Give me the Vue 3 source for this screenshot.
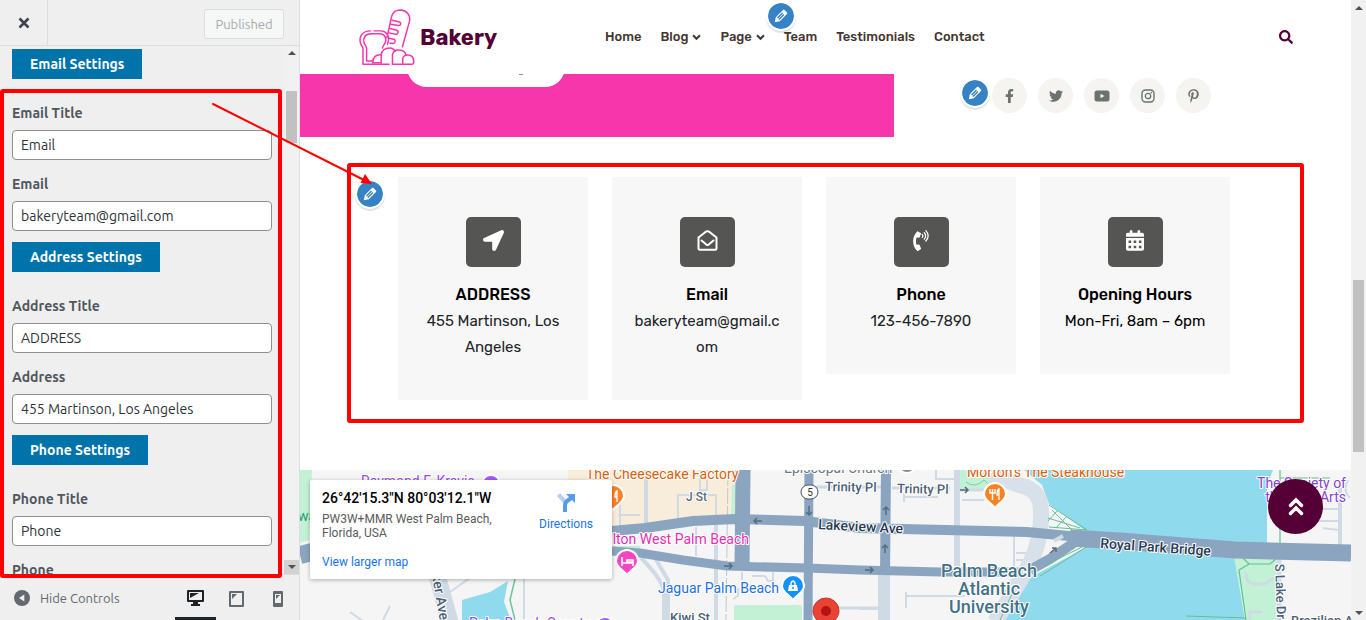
<script setup>
import { ref } from 'vue'

const groups = ref([
  { heading: 'Email Settings', fields: [
    { id: 'email-title', label: 'Email Title', value: 'Email' },
    { id: 'email', label: 'Email', value: 'bakeryteam@gmail.com' }
  ] },
  { heading: 'Address Settings', fields: [
    { id: 'address-title', label: 'Address Title', value: 'ADDRESS' },
    { id: 'address', label: 'Address', value: '455 Martinson, Los Angeles' }
  ] },
  { heading: 'Phone Settings', fields: [
    { id: 'phone-title', label: 'Phone Title', value: 'Phone' },
    { id: 'phone', label: 'Phone', value: '123-456-7890' }
  ] }
])

const nav = [
  { label: 'Home' },
  { label: 'Blog', menu: true },
  { label: 'Page', menu: true },
  { label: 'Team' },
  { label: 'Testimonials' },
  { label: 'Contact' }
]

const cards = [
  { icon: 'arrow', title: 'ADDRESS', text: '455 Martinson, Los Angeles' },
  { icon: 'mail', title: 'Email', text: 'bakeryteam@gmail.com' },
  { icon: 'phone', title: 'Phone', text: '123-456-7890' },
  { icon: 'calendar', title: 'Opening Hours', text: 'Mon-Fri, 8am – 6pm', dark: true }
]

const socials = ['Facebook', 'Twitter', 'YouTube', 'Instagram', 'Pinterest']

const pencil = 'M13.89 3.39l2.71 2.72c.46.46.42 1.24.03 1.64l-8.01 8.02-5.56 1.16 1.16-5.58s7.6-7.63 7.99-8.03c.39-.39 1.22-.39 1.68.07zm-2.73 2.79l-5.59 5.61 1.11 1.11 5.54-5.65zm-2.97 8.23l5.58-5.6-1.07-1.08-5.59 5.6z'
</script>

<template>
  <div class="app">
    <aside class="sidebar">
      <header class="side-head">
        <button class="close" type="button" aria-label="Close">
          <svg width="12" height="12" viewBox="0 0 12 12"><path d="M1.5 1.5L10.5 10.5M10.5 1.5L1.5 10.5" stroke="#3c434a" stroke-width="2.6" /></svg>
        </button>
        <button class="published" type="button" disabled>Published</button>
      </header>

      <div class="side-body">
        <form class="fields" @submit.prevent>
          <section v-for="g in groups" :key="g.heading" class="group">
            <button class="group-btn" type="button">{{ g.heading }}</button>
            <div v-for="f in g.fields" :key="f.id" class="field">
              <label :for="f.id">{{ f.label }}</label>
              <input :id="f.id" v-model="f.value" type="text" />
            </div>
          </section>
        </form>
        <div class="side-scroll">
          <i class="tri up"></i>
          <i class="side-thumb"></i>
          <span class="down-box"><i class="tri down"></i></span>
        </div>
      </div>

      <footer class="side-foot">
        <button class="hide" type="button">
          <svg width="16" height="16" viewBox="0 0 16 16"><circle cx="8" cy="8" r="8" fill="#646970" /><path d="M10.3 4.4V11.6L5 8Z" fill="#efefef" /></svg>
          Hide Controls
        </button>
        <button class="device active" type="button" aria-label="Desktop">
          <svg width="17" height="17" viewBox="0 0 17 17"><path fill-rule="evenodd" d="M1 0H16Q17 0 17 1V11Q17 12 16 12H11V14H13V16H4V14H6V12H1Q0 12 0 11V1Q0 0 1 0ZM2 2V10H15V2Z" fill="#1d2327" /><path d="M3 3H12L3 8Z" fill="#1d2327" /></svg>
        </button>
        <button class="device" type="button" aria-label="Tablet">
          <svg width="15" height="16" viewBox="0 0 15 16"><path fill-rule="evenodd" d="M1 0H14Q15 0 15 1V15Q15 16 14 16H1Q0 16 0 15V1Q0 0 1 0ZM2 2V14H13V2Z" fill="#646970" /><path d="M3 3H8L3 8Z" fill="#646970" /></svg>
        </button>
        <button class="device" type="button" aria-label="Mobile">
          <svg width="10" height="16" viewBox="0 0 10 16"><path fill-rule="evenodd" d="M1 0H9Q10 0 10 1V15Q10 16 9 16H1Q0 16 0 15V1Q0 0 1 0ZM2 3V12H8V3Z" fill="#646970" /><path d="M3 4H7L3 8Z" fill="#646970" /></svg>
        </button>
      </footer>
      <i class="mark"></i>
    </aside>

    <div class="preview">
      <main class="site">
        <header class="site-head">
          <a class="brand" href="#">
            <svg class="logo" viewBox="52 25 170 172" fill="none" stroke="#f736ab" stroke-width="4.5" stroke-linecap="round" stroke-linejoin="round">
              <path d="M89 91C64 91 54 108 58 126C60 136 66 138 66 145V192H145" />
              <path d="M99 91H120C136 91 145 106 143 118L140 132" />
              <path d="M90 100C72 100 65 114 69 127C71 134 77 136 77 144V182H94" />
              <path d="M90 100H119C134 102 138 116 133 127C131 133 125 136 125 143" />
              <path d="M138 112L153 46C157 33 169 28 180 28C197 29 209 43 207 60L185 139" />
              <path d="M154 59L176 64C182 66 181 75 174 75L149 71" />
              <path d="M147 84L168 89C175 92 172 102 165 101L144 97" />
              <path d="M144 113L159 116C166 118 164 128 157 129L147 128" />
              <path d="M121 163C106 161 96 170 95 187H119" />
              <path d="M121 189V164C123 150 134 143 147 143C154 143 160 147 163 153" />
              <path d="M155 192V163C158 151 168 148 176 149C187 150 194 156 196 164" />
              <path d="M186 191V174C189 165 196 163 203 164C214 165 219 173 219 184C220 190 217 192 213 192H155" />
            </svg>
            <strong>Bakery</strong>
          </a>
          <nav class="nav">
            <a v-for="n in nav" :key="n.label" href="#">{{ n.label }}<svg v-if="n.menu" width="9" height="7" viewBox="0 0 9 7"><path d="M1 1.3L4.500 4.800L8 1.300" fill="none" stroke="#44362f" stroke-width="2" /></svg></a>
          </nav>
          <button class="search" type="button" aria-label="Search">
            <svg width="14" height="14" viewBox="0 0 512 512"><path fill="#540037" d="M505 442.700L405.300 343c-4.500-4.500-10.600-7-17-7H372c27.600-35.300 44-79.700 44-128C416 93.100 322.900 0 208 0S0 93.100 0 208s93.100 208 208 208c48.300 0 92.700-16.400 128-44v16.300c0 6.400 2.500 12.500 7 17l99.700 99.700c9.400 9.400 24.600 9.400 33.900 0l28.300-28.300c9.400-9.400 9.400-24.600.1-34zM208 336c-70.700 0-128-57.200-128-128 0-70.700 57.200-128 128-128 70.700 0 128 57.200 128 128 0 70.700-57.200 128-128 128z" /></svg>
          </button>
          <button class="edit edit-nav" type="button" aria-label="Edit menu"><svg viewBox="0 0 20 20"><path :d="pencil" /></svg></button>
        </header>

        <section class="hero">
          <div class="hero-pink"><div class="pill"></div></div>
          <div class="socials">
            <button class="edit" type="button" aria-label="Edit social links"><svg viewBox="0 0 20 20"><path :d="pencil" /></svg></button>
            <a v-for="s in socials" :key="s" class="social" href="#" :aria-label="s">
              <svg v-if="s === 'Facebook'" width="9" height="14" viewBox="0 0 320 512"><path d="M279.140 288l14.220-92.660h-88.910v-60.130c0-25.350 12.420-50.060 52.240-50.060h40.420V6.260S260.430 0 225.360 0c-73.220 0-121.080 44.380-121.080 124.720v70.620H22.890V288h81.390v224h100.170V288z" /></svg>
              <svg v-else-if="s === 'Twitter'" width="14" height="14" viewBox="0 0 512 512"><path d="M459.370 151.716c.325 4.548.325 9.097.325 13.645 0 138.720-105.583 298.558-298.558 298.558-59.452 0-114.680-17.219-161.137-47.106 8.447.974 16.568 1.299 25.340 1.299 49.055 0 94.213-16.568 130.274-44.832-46.132-.975-84.792-31.188-98.112-72.772 6.498.974 12.995 1.624 19.818 1.624 9.421 0 18.843-1.300 27.614-3.573-48.081-9.747-84.143-51.980-84.143-102.985v-1.299c13.969 7.797 30.214 12.670 47.431 13.319-28.264-18.843-46.781-51.005-46.781-87.391 0-19.492 5.197-37.360 14.294-52.954 51.655 63.675 129.300 105.258 216.365 109.807-1.624-7.797-2.599-15.918-2.599-24.040 0-57.828 46.782-104.934 104.934-104.934 30.213 0 57.502 12.670 76.670 33.137 23.715-4.548 46.456-13.320 66.599-25.340-7.798 24.366-24.366 44.833-46.132 57.827 21.117-2.273 41.584-8.122 60.426-16.243-14.292 20.791-32.161 39.308-52.628 54.253z" /></svg>
              <svg v-else-if="s === 'YouTube'" width="16" height="14" viewBox="0 0 16 14"><path fill-rule="evenodd" d="M3 1.500H13Q15.500 1.500 15.500 4V10Q15.500 12.500 13 12.500H3Q.5 12.500 .5 10V4Q.5 1.500 3 1.500ZM6.500 4.700V9.300L10.500 7Z" /></svg>
              <svg v-else-if="s === 'Instagram'" width="14" height="14" viewBox="0 0 14 14"><g fill="none" stroke="#6b7270"><rect x="1" y="1" width="12" height="12" rx="3.500" stroke-width="1.400" /><circle cx="7" cy="7" r="2.700" stroke-width="1.300" /></g><circle cx="10.400" cy="3.600" r=".8" /></svg>
              <svg v-else width="11" height="14" viewBox="0 0 384 512"><path d="M204 6.500C101.400 6.500 0 74.900 0 185.600 0 256 39.600 296 63.600 296c9.900 0 15.600-27.600 15.600-35.400 0-9.300-23.700-29.100-23.700-67.800 0-80.400 61.200-137.400 140.400-137.400 68.100 0 118.500 38.700 118.500 109.800 0 53.100-21.300 152.700-90.300 152.700-24.900 0-46.200-18-46.200-43.800 0-37.800 26.400-74.400 26.400-113.400 0-66.200-93.900-54.200-93.900 25.800 0 16.800 2.100 35.400 9.600 50.700-13.800 59.400-42 147.900-42 209.100 0 18.900 2.700 37.500 4.500 56.400 3.400 3.800 1.700 3.400 6.900 1.500 50.400-69 48.600-82.500 71.400-172.800 12.300 23.400 44.100 36 69.300 36 106.200 0 153.900-103.500 153.900-196.800C384 71.300 298.200 6.500 204 6.500z" /></svg>
            </a>
          </div>
        </section>

        <section class="contact">
          <button class="edit edit-contact" type="button" aria-label="Edit contact details"><svg viewBox="0 0 20 20"><path :d="pencil" /></svg></button>
          <article v-for="c in cards" :key="c.title" class="card">
            <div class="card-icon">
              <svg v-if="c.icon === 'arrow'" width="21" height="21" viewBox="0 0 512 512"><path d="M444.520 3.520L28.740 195.420c-47.970 22.390-31.980 92.750 19.190 92.750h175.910v175.910c0 51.170 70.360 67.170 92.750 19.190l191.900-415.780c15.990-38.390-25.590-79.970-63.970-63.970z" /></svg>
              <svg v-else-if="c.icon === 'mail'" width="21" height="21" viewBox="0 0 21 21"><g fill="none" stroke="#fff" stroke-width="2" stroke-linejoin="round"><path d="M1.500 7.500L8.800 1.700Q10.500 .6 12.200 1.700L19.500 7.500V18.500Q19.500 19.700 18.300 19.700H2.700Q1.500 19.700 1.500 18.500Z" /><path d="M4.500 10.500L9.300 14.600Q10.500 15.500 11.700 14.600L16.500 10.500" stroke-linecap="round" /></g></svg>
              <svg v-else-if="c.icon === 'phone'" width="16" height="21" viewBox="0 0 384 512"><path d="M97.333 506.966c-129.874-129.874-129.681-340.252 0-469.933 5.698-5.698 14.527-6.632 21.263-2.422l64.817 40.513a17.187 17.187 0 0 1 6.849 20.958l-32.408 81.021a17.188 17.188 0 0 1-17.669 10.719l-55.810-5.580c-21.051 58.261-20.612 122.471 0 179.515l55.811-5.581a17.188 17.188 0 0 1 17.669 10.719l32.408 81.022a17.188 17.188 0 0 1-6.849 20.958l-64.817 40.513a17.190 17.190 0 0 1-21.264-2.422z" /><path d="M222 105Q256 140 222 178M272 62Q340 140 272 222M310 16Q424 140 310 268" fill="none" stroke="#fff" stroke-width="30" stroke-linecap="round" /></svg>
              <svg v-else width="18" height="21" viewBox="0 0 448 512"><path fill-rule="evenodd" d="M0 192H448V464Q448 512 400 512H48Q0 512 0 464ZM64 256V320H128V256ZM192 256V320H256V256ZM320 256V320H384V256ZM64 384V448H128V384ZM192 384V448H256V384ZM320 384V448H384V384ZM400 64h-48V16c0-8.800-7.200-16-16-16h-32c-8.800 0-16 7.200-16 16v48H160V16c0-8.800-7.200-16-16-16h-32c-8.800 0-16 7.200-16 16v48H48C21.500 64 0 85.500 0 112v48h448v-48c0-26.500-21.500-48-48-48z" /></svg>
            </div>
            <h3>{{ c.title }}</h3>
            <p :class="{ dark: c.dark }">{{ c.text }}</p>
          </article>
        </section>

        <section class="map">
          <svg class="map-art" viewBox="300 470 1051 150" preserveAspectRatio="xMinYMin slice">
            <rect x="300" y="470" width="1051" height="150" fill="#f5f5f5" />
            <path d="M300 470H312L309 540L300 543Z" fill="#c3f1d5" />
            <path d="M300 555L312 552" stroke="#8ba5c1" stroke-width="18" />
            <path d="M568 470H735V516L612 529H568Z" fill="#f8eddb" />
            <path d="M732 485H737V515H731Z M612 546H640V552H612Z" fill="#c3f1d5" />
            <path d="M735 605H800Q802 605 802 607V620H734V607Z" fill="#c3f1d5" />
            <path d="M960 470H990V489H960Z" fill="#c3f1d5" />
            <path d="M966 482Q975 489 984 480L990 486" fill="none" stroke="#7cc9a8" />
            <path d="M462 600L490 592L508 581L504 602L511 620H462Z" fill="#90daee" />
            <path d="M515 579L510 600L515 620" fill="none" stroke="#6cc59b" stroke-width="1.500" />
            <path d="M1024 470H1273L1267 485V552L1087 532L1049 504L1042 485Z" fill="#90daee" />
            <path d="M1000 620L1022 582L1090 545L1234 555L1245 620Z" fill="#90daee" />
            <path d="M1234 557H1276V620H1246Z" fill="#c3f1d5" />

            <g fill="none" stroke="#d0dae4">
              <path d="M437 575L450 622" stroke-width="17" />
              <path d="M450 592L474 575M350 612L370 626M382 622L390 606M524 579V620M605 470V530" stroke-width="2" />
              <path d="M646 470V526" stroke-width="4" />
              <path d="M678 520V495H716V520M700 470V490H707V470M696 527V556M618 515H640M620 500V528" stroke-width="2" />
              <path d="M716 525V620" stroke-width="4" />
              <path d="M641 558Q660 577 664 590V620M654 556L668 580V620" stroke-width="4" />
              <path d="M742 572V580M752 576H765L768 581H773V572M738 588V596L733 599" stroke-width="2" />
              <path d="M813 487H884M830 608H878" stroke-width="3" />
              <path d="M884 575V622" stroke-width="12" />
              <path d="M957 470V568" stroke-width="6" />
              <path d="M892 488H950M960 490H1000V496" stroke-width="3" />
              <path d="M904 494V502M904 497H938M936 470V479H958M962 500H984" stroke-width="2" />
              <path d="M1014 536V575M1016 553H1028M1016 560H1026M860 609H877M906 592V608M906 596H965" stroke-width="2" />
              <path d="M991 475L1022 486Q1041 490 1041 512Q1042 545 1024 574L995 622" stroke-width="16" stroke="#d8e0e9" />
              <path d="M1340 488V545" stroke-width="4" />
              <path d="M1318 509H1340M1318 521H1338M1323 528L1338 530M1348 480Q1342 490 1350 498" stroke-width="2" />
              <path d="M1246 573Q1246 584 1255 584H1265L1274 578M1250 620V612H1262" stroke-width="3" />
              <path d="M1279 558V620" stroke-width="5" />
            </g>
            <path d="M728 470L726 620" stroke="#c3c7cb" stroke-width="1" stroke-dasharray="16 2" />
            <g fill="none" stroke="#8ba5c1">
              <path d="M612 531L645 528L693 521L735 519L805 521L860 528L1027 532L1090 538L1120 541L1235 550L1351 553" stroke-width="10" />
              <path d="M1070 538L1120 541L1235 550L1351 553" stroke-width="17" />
              <path d="M612 551L640 553L683 560L727 566L807 568L860 570L940 572H1020" stroke-width="9" />
              <path d="M1030 570L1050 559L1078 540" stroke-width="10" />
              <path d="M743 470L742 568" stroke-width="15" />
              <path d="M809 470L808 620" stroke-width="9" />
              <path d="M886 470L885 575" stroke-width="10" />
            </g>
            <path d="M1054 541L1063 536" stroke="#d0dae4" stroke-width="4" />
            <path d="M1049 505L1087 530L1049 527M1052 510L1072 530M1056 528L1067 516M1048 518L1080 528M1048 521L1058 510M1088 546L1040 576M1082 547L1046 565M1012 594L1000 620" fill="none" stroke="#63c093" />
            <path d="M1280 470V545M1280 478H1330M1243 558L1249 564H1270L1276 559M1249 564L1239 570L1246 620M1186 616L1246 618" fill="none" stroke="#63c093" stroke-width="1.200" />
            <g fill="none" stroke="#536f7b" stroke-width="1.500">
              <path d="M762 521H754M757 518L754 521L757 524M724 566H732M729 563L732 566L729 569M809 506V515M806 512L809 515L812 512M886 515V507M883 510L886 507L889 510M885 553V545M882 548L885 545L888 548M1050 553L1056 548M1052 548H1056V552M960 490H968M965 487L968 490L965 493M865 570H873M870 567L873 570L870 573" />
            </g>
            <g class="txt">
              <text x="361" y="486" fill="#9a4be8" font-size="14">Raymond F. Kravis</text>
              <text x="469" y="628" fill="#9a4be8" font-size="14">Palm Beach County</text>
              <text x="586" y="479" fill="#d8610b" font-size="14">The Cheesecake Factory</text>
              <text x="967" y="477" fill="#d8610b" font-size="14">Morton's The Steakhouse</text>
              <text x="784" y="473" fill="#6a7886" font-size="14">Episcopal Church</text>
              <text x="749" y="544" fill="#e62fb0" font-size="14" text-anchor="end">Hilton West Palm Beach</text>
              <text x="658" y="593" fill="#1f6fe5" font-size="14">Jaguar Palm Beach</text>
              <g fill="#8442d6" font-size="14" text-anchor="end">
                <text x="1346" y="488">The Society of</text>
                <text x="1346" y="502">the Four Arts</text>
              </g>
            </g>
            <g class="txt road">
              <text x="686" y="501" fill="#5c6b7a" font-size="12">J St</text>
              <text x="825" y="491" font-size="13" transform="rotate(1 825 491)">Trinity Pl</text>
              <text x="897" y="493" font-size="13" transform="rotate(1 897 493)">Trinity Pl</text>
              <text x="818" y="529" fill="#283b52" font-size="14" transform="rotate(3 818 529)">Lakeview Ave</text>
              <text x="1100" y="548" fill="#283b52" font-size="14" transform="rotate(4 1100 548)">Royal Park Bridge</text>
              <text x="670" y="622" font-size="13">Kiwi St</text>
              <text x="431" y="570" font-size="14" transform="rotate(80 431 570)">rker Ave</text>
              <text x="1275" y="564" font-size="13" transform="rotate(88 1275 564)">S Lake Dr</text>
              <text x="1291" y="625" font-size="13">Brazilian Ave</text>
              <g fill="#437285" font-size="18" text-anchor="middle">
                <text x="989" y="577">Palm Beach</text>
                <text x="989" y="595">Atlantic</text>
                <text x="989" y="613">University</text>
              </g>
            </g>
            <text x="298" y="521" fill="#1f9b75" font-size="14">wa</text>
            <rect x="801" y="485" width="17" height="14" rx="7" fill="#fff" stroke="#49525c" />
            <text x="810" y="496" font-size="10" text-anchor="middle" fill="#333">5</text>
            <g stroke="#fff" stroke-width="2">
              <circle cx="491" cy="484" r="9" fill="#a259ff" />
              <circle cx="605" cy="626" r="9" fill="#a259ff" />
              <circle cx="907" cy="464" r="9" fill="#7b8d99" />
              <path d="M602 496a11 11 0 1 1 22 0c0 6-6 8-11 14c-5-6-11-8-11-14Z" fill="#ff8126" />
              <path d="M984 494a11 11 0 1 1 22 0c0 6-6 8-11 14c-5-6-11-8-11-14Z" fill="#ff8126" />
              <path d="M616 561a11 11 0 1 1 22 0c0 6-6 8-11 14c-5-6-11-8-11-14Z" fill="#f846c2" />
              <path d="M782 586a11 11 0 1 1 22 0c0 6-6 8-11 14c-5-6-11-8-11-14Z" fill="#1193fb" />
            </g>
            <g fill="none" stroke="#fff" stroke-width="1.400">
              <path d="M990 489V493H995V489M992.500 489V500M999 500V489Q997 490 997 495H999M617 502V491Q615 492 615 497H617" />
              <path d="M622 557V566M622 563H633V566M633 562V560H627V562Z" stroke-width="1.600" />
              <path d="M791 585V583Q793 579 795 583V585" />
            </g>
            <path d="M789 585H797L798 591H788Z" fill="#fff" />
            <circle cx="793" cy="588" r="1" fill="#1193fb" />
            <path d="M813 611a13 13 0 1 1 26 0c0 7-7 11-13 22c-6-11-13-15-13-22Z" fill="#ea4335" stroke="#c5352a" />
            <circle cx="826" cy="611" r="5" fill="#b31412" />
          </svg>
          <div class="place">
            <div class="place-info">
              <h4>26°42'15.3"N 80°03'12.1"W</h4>
              <p>PW3W+MMR West Palm Beach, Florida, USA</p>
              <a href="#">View larger map</a>
            </div>
            <a class="directions" href="#">
              <svg width="20" height="20" viewBox="0 0 20 20"><path d="M1 3L4 0L10 7L8 11Z" fill="#b5cff5" /><path d="M7 19V12Q7 9 9 7L13 4L10 1H19V10L16 7L12 10Q11 11 11 13V19Z" fill="#5a9be8" /></svg>
              Directions
            </a>
          </div>
        </section>

        <button class="to-top" type="button" aria-label="Back to top">
          <svg width="16" height="20" viewBox="0 0 16 20"><path d="M2.500 8.500L8 3L13.500 8.500M2.500 16.500L8 11L13.500 16.500" fill="none" stroke="#fff" stroke-width="3.400" stroke-linecap="round" /></svg>
        </button>
      </main>
      <div class="scrollbar">
        <i class="tri up"></i>
        <i class="thumb"></i>
        <i class="tri down"></i>
      </div>
    </div>

    <svg class="pointer" width="170" height="90" viewBox="0 0 170 90">
      <path d="M1 2L152 78" stroke="#f00" stroke-width="2" stroke-linecap="round" />
      <path d="M160 82L148.500 81L153 72Z" fill="#f00" />
    </svg>
  </div>
</template>

<style>
html, body { margin: 0; overflow: hidden; }
</style>

<style scoped>
.app { position: relative; display: flex; height: 100vh; overflow: hidden; background: #fff; font-family: "Rubik", "Roboto", sans-serif; }
.app *, .app *::after { box-sizing: border-box; }
button { font: inherit; margin: 0; padding: 0; border: 0; background: none; cursor: pointer; }
a { text-decoration: none; color: inherit; }
svg { display: block; flex: none; }
h3, h4, p { margin: 0; }

.sidebar { position: relative; flex: 0 0 300px; display: flex; flex-direction: column; background: #efefef; border-right: 1px solid #ddd; font-family: "Ubuntu", "Noto Sans", sans-serif; }
.side-head { flex: 0 0 46px; display: flex; align-items: stretch; justify-content: space-between; border-bottom: 1px solid #ddd; }
.close { width: 48px; border-right: 1px solid #ddd; display: flex; align-items: center; justify-content: center; }
.published { align-self: center; width: 80px; height: 30px; margin: 3px 15px 0 0; border: 1px solid #dcdcde; border-radius: 3px; background: #f6f7f7; color: #a7aaad; font-size: 13px; }
.side-body { flex: 1; min-height: 0; display: flex; overflow: hidden; }
.fields { flex: 1; padding: 3px 12px 0; overflow: hidden; }
.group { margin-bottom: 11px; }
.group-btn { display: block; height: 30px; padding: 0 18px; margin-bottom: 24px; background: #0073aa; color: #fff; font-size: 14px; font-weight: 700; line-height: 30px; }
.field { display: flex; flex-direction: column; gap: 6px; margin-bottom: 14px; }
.field:last-child { margin-bottom: 0; }
.field label { font-size: 14px; font-weight: 700; line-height: 21px; color: #50575e; }
.field input { width: 100%; height: 30px; padding: 0 8px; border: 1px solid #8c8f94; border-radius: 4px; background: #fff; color: #2c3338; font-family: inherit; font-size: 14px; line-height: 28px; }
.side-scroll { flex: 0 0 15px; display: flex; flex-direction: column; align-items: center; background: #f1f1f1; padding-top: 5px; }
.side-thumb { width: 11px; height: 52px; margin-top: 36px; background: #c1c1c1; }
.down-box { width: 15px; height: 14px; margin-top: auto; background: #d2d2d2; display: flex; align-items: center; justify-content: center; }
.tri { border: 4px solid transparent; width: 0; height: 0; }
.tri.up { border-top: 0; border-bottom-color: #505050; }
.tri.down { border-bottom: 0; border-top-color: #505050; }
.side-foot { flex: 0 0 46px; display: flex; align-items: stretch; border-top: 1px solid #ddd; }
.hide { display: flex; align-items: center; gap: 10px; width: 175px; padding-left: 14px; color: #646970; font-size: 13px; white-space: nowrap; }
.device { flex: 1; display: flex; align-items: center; justify-content: center; padding-top: 5px; border-bottom: 3px solid transparent; }
.device.active { border-color: #1d2327; }
.mark { position: absolute; inset: 89px 17px 42px 0; border: 4px solid #f00; border-radius: 3px; pointer-events: none; }

.preview { flex: 1; min-width: 0; display: flex; }
.site { position: relative; flex: 1; min-width: 0; display: flex; flex-direction: column; overflow: hidden; background: #fff; }
.scrollbar { flex: 0 0 15px; display: flex; flex-direction: column; align-items: center; padding: 6px 0 5px; background: #f1f1f1; }
.thumb { width: 11px; height: 172px; margin: 270px 0 auto; background: #c1c1c1; }

.site-head { position: relative; flex: none; display: flex; align-items: center; height: 74px; padding: 0 58px; }
.brand { display: flex; align-items: center; gap: 5px; width: 247px; }
.logo { width: 57px; height: 57px; }
.brand strong { font-size: 22px; color: #540037; }
.nav { display: flex; gap: 19px; font-size: 13px; font-weight: 500; color: #44362f; }
.nav a { display: flex; align-items: center; gap: 4px; line-height: 20px; }
.search { margin-left: auto; }
.edit { flex: none; width: 30px; height: 30px; border: 2px solid #fff; border-radius: 50%; background: #3582c4; background-clip: padding-box; box-shadow: 0 2px 1px rgba(60, 67, 74, .15); display: flex; align-items: center; justify-content: center; }
.edit svg { width: 18px; height: 18px; fill: #fff; }
.edit-nav { position: absolute; left: 466px; top: 1px; }

.hero { flex: none; display: grid; grid-template-columns: 594fr 457fr; align-items: start; padding-bottom: 26px; }
.hero-pink { height: 63px; background: #f736ab; overflow: hidden; }
.pill { display: flex; width: 158px; height: 40px; margin: -27px 0 0 107px; padding: 27px 0 0 112px; border-radius: 20px; background: #fff; }
.pill::after { content: ""; width: 4px; height: 1px; background: #8d8d8d; }
.socials { display: flex; align-items: flex-start; gap: 11px; padding: 4px 0 0 66px; }
.socials .edit { margin-right: -9px; }
.social { width: 35px; height: 35px; border-radius: 50%; background: #f5f4f1; display: flex; align-items: center; justify-content: center; fill: #6b7270; }

.contact { position: relative; flex: none; display: grid; grid-template-columns: repeat(4, minmax(0, 1fr)); gap: 24px; align-items: start; margin: 0 47px 47px; padding: 10px 70px 19px 47px; border: 4px solid #f00; border-radius: 3px; }
.edit-contact { position: absolute; left: 4px; top: 12px; }
.card { display: flex; flex-direction: column; align-items: center; padding: 40px 20px; background: #f7f7f7; text-align: center; }
.card-icon { width: 55px; height: 50px; margin-bottom: 15px; border-radius: 5px; background: #555553; display: flex; align-items: center; justify-content: center; padding-bottom: 3px; fill: #fff; }
.card h3 { font-size: 16px; font-weight: 500; line-height: 26px; color: #000; }
.card p { width: 100%; font-size: 15px; line-height: 26px; color: #212529; overflow-wrap: anywhere; }
.card p.dark { color: #000; }

.map { position: relative; flex: 1; min-height: 0; background: #f5f5f5; font-family: "Roboto", sans-serif; }
.map-art { width: 100%; height: 100%; }
.txt text { stroke: #fff; stroke-width: 2px; stroke-linejoin: round; paint-order: stroke; }
.road { font-weight: 500; fill: #4a5f78; }
.place { position: absolute; left: 10px; top: 10px; width: 302px; height: 99px; display: flex; justify-content: space-between; padding: 8px 19px 0 12px; background: #fff; border-radius: 2px; box-shadow: 0 1px 4px rgba(0, 0, 0, .3); font-size: 12px; }
.place-info { width: 180px; }
.place h4 { font-size: 14px; font-weight: 500; line-height: 20px; color: #000; white-space: nowrap; }
.place p { margin: 4px 0 15px; line-height: 14px; color: #5b5b5b; }
.place a { color: #1a73e8; }
.directions { display: flex; flex-direction: column; align-items: center; gap: 4px; padding-top: 5px; }
.to-top { position: absolute; right: 28px; bottom: 86px; width: 55px; height: 55px; border-radius: 50%; background: #540037; display: flex; align-items: center; justify-content: center; }
.pointer { position: absolute; left: 212px; top: 102px; pointer-events: none; }
</style>
